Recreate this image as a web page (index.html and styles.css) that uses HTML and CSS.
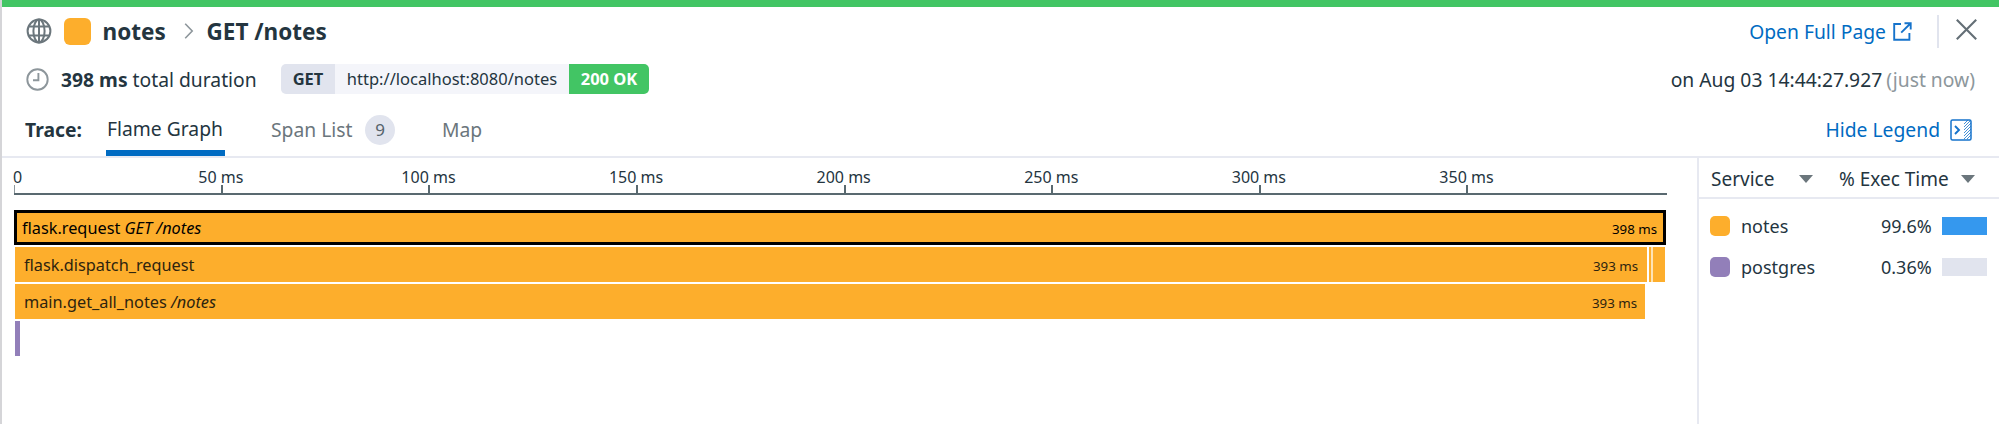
FILE: index.html
```html
<!DOCTYPE html>
<html lang="en">
<head>
<meta charset="utf-8">
<title>Trace: GET /notes</title>
<link rel="stylesheet" href="styles.css">
</head>
<body>
<div class="panel">
  <header class="title-row">
    <svg class="globe" width="26" height="26" viewBox="0 0 26 26" fill="none" stroke="#6b767c" stroke-width="2"><circle cx="13" cy="13" r="11.4"/><ellipse cx="13" cy="13" rx="5.6" ry="11.4"/><path d="M13 1.3v23.4M2.5 8.6h21M2.5 17.4h21"/></svg>
    <span class="service-chip"></span>
    <span class="title service-name">notes</span>
    <svg class="chevron" width="10" height="16" viewBox="0 0 10 16" fill="none" stroke="#8d969b" stroke-width="1.6"><path d="M1.2 .8 8.2 8 1.2 15.2"/></svg>
    <span class="title">GET /notes</span>
    <div class="title-actions">
      <a class="link">Open Full Page</a>
      <svg class="external" width="19" height="19" viewBox="0 0 19 19" fill="none" stroke="#1673cb" stroke-width="1.9"><path d="M8 2H1.2v15.8h15.2V11M11.5 1.2h6.2v6.2M17.4 1.5 8.2 10.7"/></svg>
      <span class="divider"></span>
      <svg class="close" width="21" height="21" viewBox="0 0 21 21" fill="none" stroke="#646f76" stroke-width="2.1"><path d="m.8.8 19.4 19.4M20.2.8.8 20.2"/></svg>
    </div>
  </header>
  <div class="meta-row">
    <svg class="clock" width="23" height="23" viewBox="0 0 23 23" fill="none" stroke="#8d969b" stroke-width="1.9"><circle cx="11.5" cy="11.5" r="10.2"/><path d="M12.4 5v7.3H7"/></svg>
    <span class="duration"><b>398 ms</b> total duration</span>
    <div class="request">
      <span class="method">GET</span><span class="url">http://localhost:8080/notes</span><span class="status">200 OK</span>
    </div>
    <span class="timestamp">on Aug 03 14:44:27.927 <span class="ago">(just now)</span></span>
  </div>
  <nav class="tabs">
    <b class="tabs-label">Trace:</b>
    <span class="tab active">Flame Graph</span>
    <span class="tab spans">Span List</span>
    <span class="count">9</span>
    <span class="tab map">Map</span>
    <a class="link hide-link">Hide Legend</a>
    <svg class="legend-icon" width="22" height="22" viewBox="0 0 22 22" fill="none" stroke="#1673cb" stroke-width="1.5"><rect x="1" y="1" width="20" height="20" rx="1.5"/><path stroke-width="1.9" d="m5 7 4 4-4 4"/><path stroke-width=".8" d="M14 5l4-4M14 8l7-7M14 11l7-7M14 14l7-7M14 17l7-7M14 20l7-7M17 20l4-4"/></svg>
  </nav>
  <main class="content">
    <section class="graph">
      <div class="axis">
        <div class="tick first">0</div><div class="tick"><span>50 ms</span></div><div class="tick"><span>100 ms</span></div><div class="tick"><span>150 ms</span></div><div class="tick"><span>200 ms</span></div><div class="tick"><span>250 ms</span></div><div class="tick"><span>300 ms</span></div><div class="tick"><span>350 ms</span></div>
      </div>
      <div class="flames">
        <div class="span root"><span>flask.request <i>GET /notes</i></span><span class="ms">398 ms</span></div>
        <div class="line">
          <div class="span dispatch"><span>flask.dispatch_request</span><span class="ms">393 ms</span></div>
          <div class="sliver"></div><div class="tail"></div>
        </div>
        <div class="span handler"><span>main.get_all_notes <i>/notes</i></span><span class="ms">393 ms</span></div>
        <div class="span db"></div>
      </div>
    </section>
    <aside class="legend">
      <div class="legend-head">
        <span>Service</span><span class="caret"></span><span class="exec">% Exec Time</span><span class="caret"></span>
      </div>
      <div class="legend-row first-row"><span class="swatch notes"></span><span class="name">notes</span><span class="pct">99.6%</span><span class="meter full"></span></div>
      <div class="legend-row"><span class="swatch postgres"></span><span class="name">postgres</span><span class="pct">0.36%</span><span class="meter"></span></div>
    </aside>
  </main>
</div>
</body>
</html>
```
FILE: styles.css
```css
* { box-sizing: border-box; }
body {
  margin: 0;
  background: #fff;
  color: #24353f;
  font: 19.3px/26px "Noto Sans", sans-serif;
}
svg { display: block; flex: none; }
span, a, b { white-space: nowrap; }
.panel {
  width: 1999px;
  height: 424px;
  overflow: hidden;
  border-left: 2px solid #d5d5d8;
  display: flex;
  flex-direction: column;
}
.title-row {
  height: 55px;
  flex: none;
  border-top: 7px solid #42c564;
  padding: 2px 22px 0 24px;
  display: flex;
  align-items: center;
}
.globe, .chevron, .external { margin-top: -2px; }
.service-chip {
  width: 27px;
  height: 27px;
  margin: -2px 0 0 12px;
  border-radius: 6px;
  background: #fdae2c;
}
.title { font-size: 22.5px; font-weight: 700; }
.service-name { width: 81px; margin-left: 11.5px; }
.chevron { margin-right: 13px; }
.title-actions { margin-left: auto; display: flex; align-items: center; }
.link { color: #006bc2; }
.external { margin-left: 7px; }
.divider { width: 2px; height: 33px; margin: -2px 17px 0 25px; background: #e1e4ee; }
.close { margin-top: -5px; }
.meta-row {
  height: 48px;
  flex: none;
  padding: 0 24px;
  display: flex;
  align-items: center;
}
.clock { margin-right: 12px; }
.duration { width: 220px; padding-top: 1px; }
.request {
  height: 30px;
  display: flex;
  border-radius: 5px;
  overflow: hidden;
  font-size: 16.5px;
  line-height: 30px;
  text-align: center;
}
.method { width: 54px; background: #e1e4ee; font-weight: 700; }
.url { width: 234px; background: #f4f5fa; }
.status { width: 80px; background: #42c564; color: #fff; font-weight: 700; }
.timestamp { margin-left: auto; padding-top: 1px; }
.ago { color: #8d979c; margin-left: -1px; }
.tabs {
  height: 55px;
  flex: none;
  border-bottom: 2px solid #e7e9f1;
  padding: 0 27px 0 23px;
  display: flex;
  align-items: center;
}
.tabs-label { width: 81px; }
.tabs-label, .tab, .hide-link { padding-top: 1px; }
.tab { color: #6b767c; }
.active {
  width: 119px;
  height: 53px;
  line-height: 52px;
  padding: 0 0 0 1px;
  color: #24353f;
  border-bottom: 6px solid #006bc2;
}
.spans { margin-left: 46px; width: 94px; }
.count {
  width: 30px;
  height: 30px;
  border-radius: 50%;
  background: #e1e4ee;
  font-size: 17px;
  line-height: 29px;
  text-align: center;
  color: #56636b;
}
.map { margin-left: 47px; }
.hide-link { margin-left: auto; }
.legend-icon { margin-left: 10px; }
.content { flex: 1; display: flex; min-height: 0; }
.graph { width: 1695px; padding: 13px 0 0 12px; }
.axis {
  width: 1653px;
  height: 24px;
  border-bottom: 2px solid #596970;
  display: flex;
  font-size: 16px;
  line-height: 12px;
  margin-bottom: 15px;
}
.tick {
  width: 207.6px;
  height: 24px;
  flex: none;
  display: flex;
  flex-direction: column;
}
.first { width: 206.9px; text-indent: -1px; }
.tick::after { content: ""; width: 2px; height: 8px; margin-top: 2px; background: #596970; }
.first::after { width: 1px; background: #8d979c; }
/* Labels after zero are centred over their tick marks. */
.tick span { align-self: flex-start; transform: translateX(-50%); }
.flames { display: flex; flex-direction: column; gap: 2px; color: #2d240f; }
.span {
  height: 35px;
  background: #fdae2c;
  margin-left: 1px;
  padding: 0 8px 0 9px;
  display: flex;
  justify-content: space-between;
  align-items: center;
  font-size: 16.3px;
}
.ms { font-size: 13.3px; padding-top: 2px; }
.root { width: 1652px; margin-left: 0; padding: 0 6px 0 5px; border: 3px solid #000; color: #000; }
.line { display: flex; }
.dispatch { width: 1632px; padding-right: 9px; }
.sliver { width: 2px; margin-left: 2px; background: #fdae2c; }
.tail { width: 14px; border-left: 2px solid #fee3b5; background: #fdae2c; }
.handler { width: 1630px; }
.db { width: 5px; padding: 0; background: #927fb9; }
.legend { flex: 1; border-left: 2px solid #e7e9f1; }
.legend-head {
  height: 41px;
  border-bottom: 2px solid #e7e9f1;
  padding: 2px 24px 0 12px;
  display: grid;
  grid-template-columns: 88px 40px 122px 13px;
  align-items: center;
  font-size: 19px;
}
.caret { width: 0; border: 7px solid transparent; border-top: 8px solid #6b767c; border-bottom: 0; }
.legend-row {
  height: 52px;
  padding-left: 11px;
  display: grid;
  grid-template-columns: 31px 140px 49px 45px;
  align-items: center;
  font-size: 18px;
}
.first-row { padding-top: 12px; height: 42px; }
.swatch { width: 20px; height: 20px; border-radius: 5px; }
.notes { background: #fdae2c; }
.postgres { background: #927fb9; }
.meter { height: 18px; margin-left: 12px; width: 45px; background: #e1e4ee; }
.full { background: #3598ee; }
```
